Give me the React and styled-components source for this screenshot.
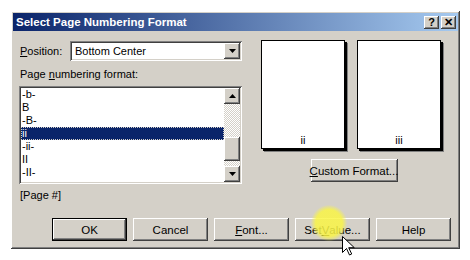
import React from 'react'
import styled, { createGlobalStyle, css } from 'styled-components'

const GlobalStyle = createGlobalStyle`
  html, body { margin: 0; background: #fff; }
  body {
    font-family: "Liberation Sans", Arial, sans-serif;
    font-size: 11px;
    color: #000;
  }
`

const raised = css`
  box-shadow: inset -1px -1px #404040, inset 1px 1px #fff,
    inset -2px -2px #808080, inset 2px 2px #d4d0c8;
`

const sunken = css`
  box-shadow: inset 1px 1px #808080, inset -1px -1px #fff,
    inset 2px 2px #404040, inset -2px -2px #d4d0c8;
`

const Screen = styled.div`
  position: relative;
  width: 470px;
  height: 260px;
  padding: 11px 0 0 11px;
  box-sizing: border-box;
  overflow: hidden;
`

const Dialog = styled.div`
  width: 449px;
  height: 238px;
  box-sizing: border-box;
  padding: 2px;
  background: #d4d0c8;
  display: flex;
  flex-direction: column;
  ${raised}
`

const TitleBar = styled.div`
  height: 18px;
  display: flex;
  align-items: center;
  padding: 0 2px 0 3px;
  background: linear-gradient(to right, #0a246a, #a6caf0);
  color: #fff;
  font-weight: bold;
  font-size: 11.5px;
`

const TitleText = styled.span`
  flex: 1;
  white-space: nowrap;
`

const TitleButton = styled.div`
  width: 15px;
  height: 13px;
  margin-left: ${p => p.$gap || 0}px;
  background: #d4d0c8;
  color: #000;
  display: flex;
  align-items: center;
  justify-content: center;
  font-size: 11px;
  font-weight: bold;
  ${raised}
`

const Body = styled.div`
  flex: 1;
  display: flex;
  flex-direction: column;
  padding: 9px 0 6px 6px;
`

const Columns = styled.div`
  display: flex;
  gap: 19px;
`

const LeftCol = styled.div`
  width: 223px;
  display: flex;
  flex-direction: column;
`

const RightCol = styled.div`
  width: 186px;
  display: flex;
  flex-direction: column;
  align-items: center;
`

const Row = styled.div`
  display: flex;
  align-items: center;
  margin-top: 1px;
`

const Label = styled.div`
  width: ${p => p.$width ? `${p.$width}px` : 'auto'};
  height: 13px;
  line-height: 13px;
  padding-left: 1px;
  margin-top: ${p => p.$top || 0}px;
  white-space: nowrap;
`

const U = styled.span`
  text-decoration: underline;
`

const Combo = styled.div`
  flex: 1;
  height: 20px;
  box-sizing: border-box;
  background: #fff;
  display: flex;
  align-items: center;
  padding: 2px;
  ${sunken}
`

const ComboText = styled.span`
  flex: 1;
  padding-left: 3px;
`

const ArrowButton = styled.div`
  width: 16px;
  height: ${p => p.$h || 16}px;
  flex: none;
  background: #d4d0c8;
  display: flex;
  align-items: center;
  justify-content: center;
  ${raised}
`

const ListBox = styled.div`
  margin-top: 5px;
  height: 98px;
  box-sizing: border-box;
  padding: 2px;
  background: #fff;
  display: flex;
  ${sunken}
`

const Items = styled.div`
  flex: 1;
  overflow: hidden;
`

const Item = styled.div`
  height: 13px;
  line-height: 13px;
  padding-left: 1px;
  box-sizing: border-box;
  background: ${p => p.$selected ? '#0a246a' : 'transparent'};
  color: ${p => p.$selected ? '#fff' : '#000'};
  outline: ${p => p.$selected ? '1px dotted #d4d0c8' : 'none'};
  outline-offset: -1px;
`

const ScrollBar = styled.div`
  width: 16px;
  display: flex;
  flex-direction: column;
`

const Track = styled.div`
  flex: ${p => p.$grow || 1};
  background-color: #fff;
  background-image: repeating-conic-gradient(#d4d0c8 0 25%, #fff 0 50%);
  background-size: 2px 2px;
`

const Thumb = styled.div`
  height: 24px;
  background: #d4d0c8;
  ${raised}
`

const Previews = styled.div`
  display: flex;
  gap: 12px;
  align-self: stretch;
`

const PreviewPage = styled.div`
  width: 84px;
  height: 109px;
  box-sizing: border-box;
  border: 1px solid #000;
  background: #fff;
  color: #000;
  box-shadow: 2px 2px 0 #000, 3px 3px 0 #808080;
  display: flex;
  align-items: flex-end;
  justify-content: center;
  padding-bottom: 2px;
  line-height: 12px;
`

const Button = styled.div`
  width: ${p => p.$width || 75}px;
  height: 23px;
  box-sizing: border-box;
  background: #d4d0c8;
  display: flex;
  align-items: center;
  justify-content: center;
  white-space: nowrap;
  font-size: 11.5px;
  ${raised}
  ${p => p.$default && css`
    border: 1px solid #000;
    box-shadow: inset -1px -1px #404040, inset 1px 1px #fff,
      inset -2px -2px #808080;
  `}
`

const CustomButton = styled(Button)`
  margin-top: 10px;
`

const ButtonRow = styled.div`
  display: flex;
  gap: 6px;
  margin-top: auto;
  padding-left: 33px;
`

const Highlight = styled.div`
  position: absolute;
  left: 311px;
  top: 205px;
  width: 36px;
  height: 36px;
  border-radius: 50%;
  background: radial-gradient(circle, rgba(250, 245, 70, 0.85) 52%, rgba(250, 245, 70, 0) 72%);
  pointer-events: none;
`

const Cursor = styled.svg`
  position: absolute;
  left: 342px;
  top: 236px;
`

const Down = () => (
  <svg width="7" height="4" viewBox="0 0 7 4"><path d="M0 0h7L3.5 4z" fill="#000" /></svg>
)

const Up = () => (
  <svg width="7" height="4" viewBox="0 0 7 4"><path d="M0 4h7L3.5 0z" fill="#000" /></svg>
)

const formats = ['-b-', 'B', '-B-', 'ii', '-ii-', 'II', '-II-']

export default function App() {
  return (
    <Screen>
      <GlobalStyle />
      <Dialog>
        <TitleBar>
          <TitleText>Select Page Numbering Format</TitleText>
          <TitleButton>?</TitleButton>
          <TitleButton $gap={2}>✕</TitleButton>
        </TitleBar>
        <Body>
          <Columns>
            <LeftCol>
              <Row>
                <Label $width={50}><U>P</U>osition:</Label>
                <Combo>
                  <ComboText>Bottom Center</ComboText>
                  <ArrowButton><Down /></ArrowButton>
                </Combo>
              </Row>
              <Label $top={7}>Page <U>n</U>umbering format:</Label>
              <ListBox>
                <Items>
                  {formats.map(f => (
                    <Item key={f} $selected={f === 'ii'}>{f}</Item>
                  ))}
                </Items>
                <ScrollBar>
                  <ArrowButton><Up /></ArrowButton>
                  <Track $grow={36} />
                  <Thumb />
                  <Track $grow={6} />
                  <ArrowButton><Down /></ArrowButton>
                </ScrollBar>
              </ListBox>
              <Label $top={5}>[Page #]</Label>
            </LeftCol>
            <RightCol>
              <Previews>
                <PreviewPage>ii</PreviewPage>
                <PreviewPage>iii</PreviewPage>
              </Previews>
              <CustomButton $width={87}><U>C</U>ustom Format...</CustomButton>
            </RightCol>
          </Columns>
          <ButtonRow>
            <Button $default>OK</Button>
            <Button>Cancel</Button>
            <Button><U>F</U>ont...</Button>
            <Button>Set <U>V</U>alue...</Button>
            <Button>Help</Button>
          </ButtonRow>
        </Body>
      </Dialog>
      <Highlight />
      <Cursor width="13" height="20" viewBox="0 0 13 20">
        <path d="M0.5 0.5v16l4-4 3 6.5 2.2-1-3-6.3h5.6z" fill="#fff" stroke="#000" strokeWidth="1" />
      </Cursor>
    </Screen>
  )
}
